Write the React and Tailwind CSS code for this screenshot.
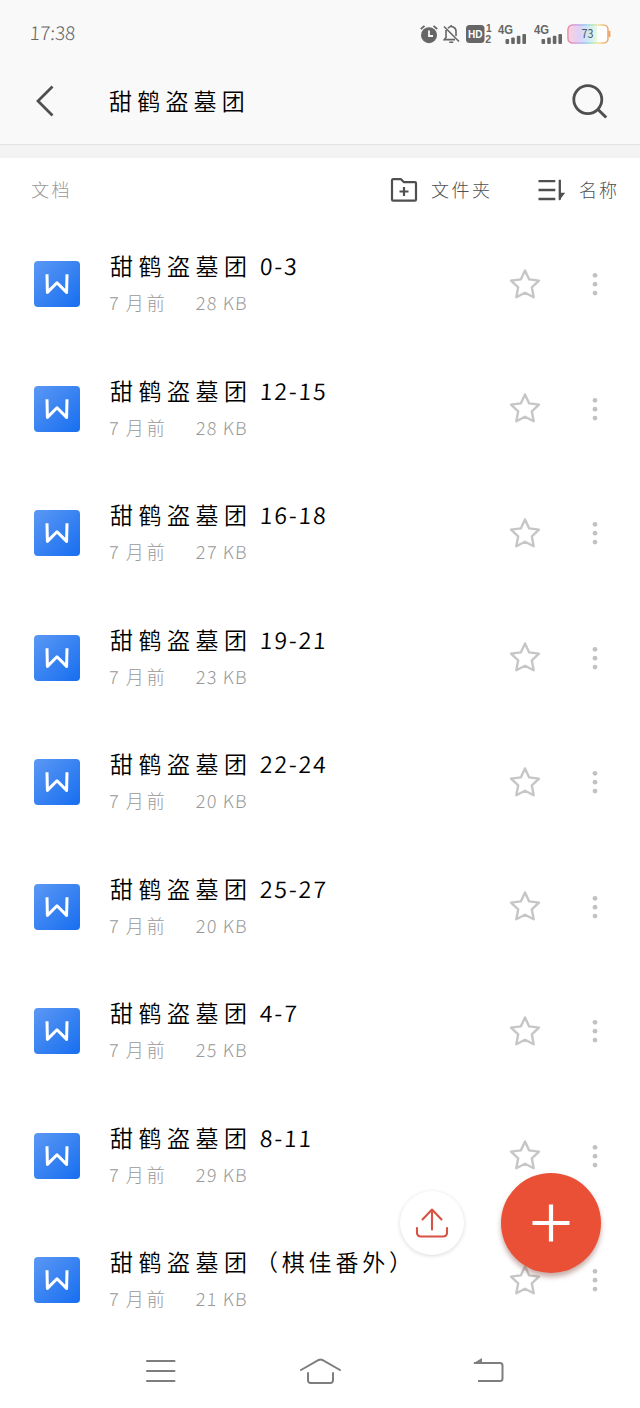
const files = [
  { suffix: "0-3", size: "28 KB" },
  { suffix: "12-15", size: "28 KB" },
  { suffix: "16-18", size: "27 KB" },
  { suffix: "19-21", size: "23 KB" },
  { suffix: "22-24", size: "20 KB" },
  { suffix: "25-27", size: "20 KB" },
  { suffix: "4-7", size: "25 KB" },
  { suffix: "8-11", size: "29 KB" },
  { suffix: "（棋佳番外）", size: "21 KB", wide: true },
];

function Signal({ className = "" }) {
  return (
    <svg className={className} width="30" height="22" viewBox="0 0 30 22" fill="#666">
      <text x="0" y="10.5" fontSize="12.5" fontWeight="700" fontFamily="Liberation Sans, sans-serif" textLength="15" lengthAdjust="spacingAndGlyphs">
        4G
      </text>
      <rect x="7.5" y="16" width="3.6" height="5" rx="1" />
      <rect x="13.2" y="14.5" width="3.6" height="6.5" rx="1" />
      <rect x="18.8" y="12.8" width="3.6" height="8.2" rx="1" />
      <rect x="24.4" y="11" width="3.6" height="10" rx="1" />
    </svg>
  );
}

function StatusBar() {
  return (
    <div className="flex h-[58px] items-start">
      <span className="ml-[30px] mt-[18px] w-[110px] text-[19px] leading-7 font-light text-[#666]">
        <span className="inline-block -skew-x-3">17:38</span>
      </span>
      <div className="ml-[280px] mt-[23px] flex h-[22px] items-center">
        {/* alarma */}
        <svg width="18" height="20" viewBox="0 0 18 20" fill="none">
          <circle cx="9" cy="11.2" r="8" fill="#666" />
          <path d="M.8 5 4.5 1.9M17.2 5l-3.7-3.1" stroke="#666" strokeWidth="1.8" />
          <path d="M9 6.5V12h4" stroke="#f9f9f9" strokeWidth="1.8" />
        </svg>
        {/* campana tachada */}
        <svg className="ml-[5px]" width="17" height="20" viewBox="0 0 17 20" fill="none" stroke="#666" strokeWidth="1.6">
          <path d="M1 2.5 16 17.5M5 4.3a4.5 4.5 0 0 1 8 3V12M3 6v7.5L1.3 15.6H12M8.2 1v2M6.3 18.3h4" />
        </svg>
        <svg className="ml-[6px]" width="26" height="20" viewBox="0 0 26 20" fontFamily="Liberation Sans, sans-serif" fontWeight="700">
          <rect x="0" y="1" width="18.5" height="18" rx="3.5" fill="#666" />
          <text x="2" y="14" fontSize="11.5" fill="#fff" textLength="14.5" lengthAdjust="spacingAndGlyphs">HD</text>
          <text x="20" y="8.3" fontSize="10" fill="#666">1</text>
          <text x="19.3" y="19" fontSize="10.5" fill="#666">2</text>
        </svg>
        <Signal className="ml-[6px]" />
        <Signal className="ml-[6px]" />
        <svg className="ml-[3px]" width="44" height="20" viewBox="0 0 44 20">
          <defs>
            <linearGradient id="batteryLine">
              <stop offset="0" stopColor="#e58aa5" />
              <stop offset=".25" stopColor="#c79ae6" />
              <stop offset=".42" stopColor="#8cc3f2" />
              <stop offset=".6" stopColor="#a5e6bb" />
              <stop offset=".75" stopColor="#f6e29a" />
              <stop offset="1" stopColor="#efa263" />
            </linearGradient>
            <linearGradient id="batteryFill">
              <stop offset="0" stopColor="#fad0dc" />
              <stop offset=".35" stopColor="#e1d0f7" />
              <stop offset=".65" stopColor="#c9e6fb" />
              <stop offset="1" stopColor="#e8fbe0" />
            </linearGradient>
          </defs>
          <rect x="1" y="1" width="40" height="18" rx="4.5" fill="#fff" />
          <path d="M5 2h25v16H5a3 3 0 0 1-3-3V5a3 3 0 0 1 3-3Z" fill="url(#batteryFill)" />
          <rect x="1" y="1" width="40" height="18" rx="4.5" fill="none" stroke="url(#batteryLine)" strokeWidth="1.5" />
          <path d="M42.5 7v6" stroke="#efa263" strokeWidth="1.8" />
          <text x="14.5" y="14" fontSize="12" fill="#555" textLength="12" lengthAdjust="spacingAndGlyphs" fontFamily="Noto Sans CJK SC, sans-serif" fontWeight="400">73</text>
        </svg>
      </div>
    </div>
  );
}

function Header() {
  return (
    <header className="h-[145px] border-b border-[#e2e2e2] bg-[#f9f9f9]">
      <StatusBar />
      <div className="flex h-[86px] items-center">
        <svg className="ml-[35px]" width="20" height="34" viewBox="0 0 20 34" fill="none" stroke="#4f4f4f" strokeWidth="2.8">
          <path d="M17.5 2.5 3 17l14.5 14.5" />
        </svg>
        <h1 className="-mt-[2px] ml-[54px] w-[440px] text-[23px] leading-8 font-[350] tracking-[5.2px] text-black">甜鹤盗墓团</h1>
        <svg className="ml-[23px]" width="38" height="36" viewBox="0 0 38 36" fill="none" stroke="#4f4f4f" strokeWidth="2.8">
          <circle cx="15.8" cy="16.6" r="14" />
          <path d="m26 26.5 8.2 8" strokeWidth="3" />
        </svg>
      </div>
    </header>
  );
}

function Toolbar() {
  return (
    <div className="flex h-16 items-center text-[18px] leading-6 font-light text-[#505050]">
      <span className="-mt-[2px] ml-[31px] w-[359px] tracking-[2.5px] text-[#999]">文档</span>
      <svg width="28" height="24" viewBox="0 0 28 24" fill="none" stroke="#4f4f4f" strokeWidth="2.2">
        <path d="M2 2.2a1 1 0 0 1 1-1h8l3 3h11a1 1 0 0 1 1 1V21.5a1.2 1.2 0 0 1-1.2 1.2H3.2A1.2 1.2 0 0 1 2 21.5Z" strokeLinejoin="round" />
        <path d="M14 9v9M9.5 13.5h9" strokeWidth="2.2" />
      </svg>
      <span className="-mt-[2px] ml-[13px] w-[107px] tracking-[2.5px]">文件夹</span>
      <svg width="28" height="24" viewBox="0 0 28 24" fill="none" stroke="#4f4f4f" strokeWidth="2.3">
        <path d="M.5 3.2h16.8M.5 12h16.8M.5 21h16.8M21.8 1.8v20" />
        <path d="M21 14.8h6.2L21 22.8Z" fill="#4f4f4f" stroke="none" />
      </svg>
      <span className="-mt-[2px] ml-[13px] tracking-[2px]">名称</span>
    </div>
  );
}

function DocIcon() {
  return (
    <svg className="ml-[34px] shrink-0" width="46" height="46" viewBox="0 0 46 46">
      <defs>
        <linearGradient id="docBlue" x1="0" y1="0" x2="1" y2="1">
          <stop offset="0" stopColor="#5b98f4" />
          <stop offset="1" stopColor="#176ef0" />
        </linearGradient>
      </defs>
      <rect width="46" height="46" rx="4" fill="url(#docBlue)" />
      <path d="M13 13.2 13.4 31.4 23 21.8l9.6 9.6.4-18.2" fill="none" stroke="#fff" strokeWidth="3" strokeLinejoin="round" />
    </svg>
  );
}

function FileRow({ suffix, size, wide }) {
  return (
    <li className="flex h-[124.5px] items-center">
      <DocIcon />
      <div className="ml-[30px] w-[399px]">
        <div className="flex h-[37px] items-center pb-px text-[23px] font-[350] whitespace-nowrap text-black">
          <span className="w-[150px] shrink-0 tracking-[5.5px]">甜鹤盗墓团</span>
          {wide ? (
            <span className="-ml-[5px] tracking-[3.8px]">{suffix}</span>
          ) : (
            <span className="inline-block -skew-x-3 tracking-[1.9px]">{suffix}</span>
          )}
        </div>
        <div className="flex h-[37px] items-center text-[18px] font-light text-[#999]">
          <span className="w-[86px] tracking-[3px]">
            <span className="mr-1 -ml-px inline-block -skew-x-3">7</span>月前
          </span>
          <span className="inline-block -skew-x-3 tracking-[1.2px]">{size}</span>
        </div>
      </div>
      <svg className="-mt-px" width="32" height="32" viewBox="0 0 32 32" fill="none" stroke="#c6c6c6" strokeWidth="2.4" strokeLinejoin="round">
        <path d="m16 2.4 4.2 9 9.8 1.2-7.2 6.7 1.9 10-8.7-4.6-8.7 4.6 1.9-10L2 12.6l9.8-1.2Z" />
      </svg>
      <svg className="ml-[51px]" width="6" height="26" viewBox="0 0 6 26" fill="#c2c2c2">
        <circle cx="3" cy="4.3" r="2.4" />
        <circle cx="3" cy="13.2" r="2.4" />
        <circle cx="3" cy="22.1" r="2.4" />
      </svg>
    </li>
  );
}

function NavBar() {
  return (
    <nav className="flex h-[57px] items-center">
      <svg className="ml-[145px]" width="31" height="26" viewBox="0 0 31 26" stroke="#7e7e7e" strokeWidth="2" strokeLinecap="round">
        <path d="M2 3h27.5M2 13h27.5M2 23h27.5" />
      </svg>
      <svg className="ml-[123px]" width="44" height="28" viewBox="0 0 44 28" fill="none" stroke="#7e7e7e" strokeWidth="2" strokeLinecap="round">
        <path d="M2 13 19.7 3a4 4 0 0 1 3.6 0L41 13M9 16v7.5a2.5 2.5 0 0 0 2.5 2.5h20a2.5 2.5 0 0 0 2.5-2.5V16" />
      </svg>
      <svg className="ml-[130px]" width="31" height="28" viewBox="0 0 31 28" fill="none" stroke="#7e7e7e" strokeWidth="2">
        <path d="M1 6h26a2.5 2.5 0 0 1 2.5 2.5v13a2.5 2.5 0 0 1-2.5 2.500H5" />
        <path d="M0 6.5 9 1v5.5Z" fill="#7e7e7e" stroke="none" />
      </svg>
    </nav>
  );
}

export default function App() {
  return (
    <div className="relative h-[1408px] w-[640px] overflow-hidden bg-white font-['Noto_Sans_CJK_SC',sans-serif]">
      <Header />
      <div className="h-[13px] bg-[#f3f3f3]" />
      <Toolbar />
      <ul>
        {files.map((file) => (
          <FileRow key={file.suffix} {...file} />
        ))}
      </ul>
      <NavBar />

      {/* botones flotantes */}
      <button className="absolute top-[1191px] left-[400px] flex size-16 items-center justify-center rounded-full bg-white shadow-[0_1px_4px_rgba(0,0,0,0.15)]">
        <svg width="34" height="32" viewBox="0 0 34 32" fill="none" stroke="#d75345" strokeWidth="2.1" strokeLinecap="round" strokeLinejoin="round">
          <path d="M17 22.5V3M7.5 12.5 17 2.500l9.5 10M2 21v5a3.5 3.5 0 0 0 3.5 3.500h23A3.5 3.5 0 0 0 32 26v-5" />
        </svg>
      </button>
      <button className="absolute top-[1173px] left-[501px] flex size-[100px] items-center justify-center rounded-full bg-[#ea5036] shadow-[0_4px_5px_rgba(110,40,30,0.38)]">
        <svg width="38" height="38" viewBox="0 0 38 38" stroke="#fff" strokeWidth="4.2">
          <path d="M19 .5v37M.5 19h37" />
        </svg>
      </button>
    </div>
  );
}
